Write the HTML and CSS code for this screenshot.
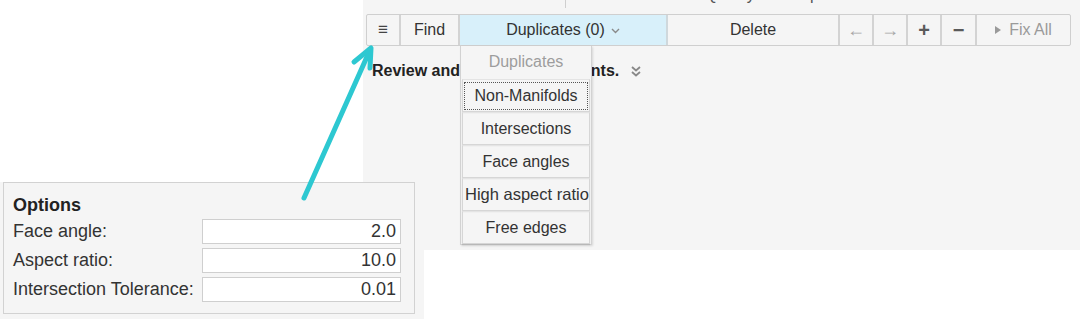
FILE: index.html
```html
<!DOCTYPE html>
<html lang="en">
<head>
    <meta charset="UTF-8">
    <title>Quality Cleanup</title>
    <link rel="stylesheet" href="styles.css">
</head>
<body>
    <div class="cleanup">
        <div class="title-bar">
            <span class="title-sep"></span>
            <span class="title">Quality Cleanup</span>
        </div>
        <div class="toolbar">
            <div class="tool tool-menu">&#8801;</div>
            <div class="tool tool-find">Find</div>
            <div class="tool tool-dup">Duplicates (0)
                <svg class="caret" width="9" height="6" viewBox="0 0 9 6"><path d="M1 1 L4.5 4.5 L8 1" fill="none" stroke="#8a8a8a" stroke-width="1.4"/></svg>
            </div>
            <div class="tool tool-delete">Delete</div>
            <div class="tool tool-arrow dim">&#8592;</div>
            <div class="tool tool-arrow dim">&#8594;</div>
            <div class="tool tool-arrow strong">+</div>
            <div class="tool tool-arrow strong minus">&#8722;</div>
            <div class="tool tool-fix dim">
                <svg width="6" height="8" viewBox="0 0 6 8"><path d="M0 0 L6 4 L0 8 Z" fill="#9a9a9a"/></svg>
                Fix All
            </div>
        </div>
        <div class="review">
            Review and correct all elements.
            <svg class="more" width="10" height="11" viewBox="0 0 10 11"><path d="M1 1 L5 4.5 L9 1 M1 6 L5 9.5 L9 6" fill="none" stroke="#888" stroke-width="1.8"/></svg>
        </div>

        <div class="dropdown">
            <div class="drop-head">Duplicates</div>
            <div class="drop-item focused"><span>Non-Manifolds</span></div>
            <div class="drop-item"><span>Intersections</span></div>
            <div class="drop-item"><span>Face angles</span></div>
            <div class="drop-item wide"><span>High aspect ratio elements</span></div>
            <div class="drop-item"><span>Free edges</span></div>
        </div>
    </div>

    <div class="options-wrap">
        <div class="options">
            <div class="options-title">Options</div>
            <div class="opt-row">
                <label>Face angle:</label>
                <div class="opt-input">2.0</div>
            </div>
            <div class="opt-row">
                <label>Aspect ratio:</label>
                <div class="opt-input">10.0</div>
            </div>
            <div class="opt-row">
                <label>Intersection Tolerance:</label>
                <div class="opt-input">0.01</div>
            </div>
        </div>
    </div>

    <svg class="pointer" width="1080" height="319" viewBox="0 0 1080 319">
        <line x1="304" y1="198" x2="370" y2="50" stroke="#2dc8d1" stroke-width="5" stroke-linecap="round"/>
        <polyline points="354,62 371,48 370,68" fill="none" stroke="#2dc8d1" stroke-width="5" stroke-linecap="round" stroke-linejoin="round"/>
    </svg>
</body>
</html>
```

FILE: styles.css
```css
* {
    margin: 0;
    padding: 0;
    box-sizing: border-box;
}

body {
    width: 1080px;
    height: 319px;
    background-color: #fff;
    font-family: "Liberation Sans", Arial, sans-serif;
    color: #333;
    position: relative;
    overflow: hidden;
}

.cleanup {
    position: absolute;
    left: 363px;
    top: 0;
    width: 717px;
    height: 250px;
    background-color: #f5f5f5;
}

.title-bar {
    height: 14px;
    display: flex;
    overflow: hidden;
}

.title-sep {
    width: 1px;
    height: 8px;
    margin-left: 202px;
    background-color: #cfcfcf;
}

.title {
    margin-left: 139px;
    margin-top: -13px;
    font-size: 16px;
    line-height: 16px;
    color: #555;
}

.toolbar {
    display: flex;
    margin-left: 3px;
    width: 705px;
    height: 32px;
    border: 1px solid #cfcfcf;
    border-radius: 2px;
    background-color: #f5f5f5;
}

.tool {
    display: flex;
    align-items: center;
    justify-content: center;
    gap: 6px;
    font-size: 16px;
    color: #333;
    border-right: 2px solid #d3d3d3;
}

.tool:last-child {
    border-right: none;
}

.tool-menu {
    width: 34px;
    font-size: 17px;
    font-weight: bold;
    color: #444;
}

.tool-find {
    width: 59px;
}

.tool-dup {
    width: 208px;
    background-color: #d8f0fa;
    border-right-color: #cfd8dc;
}

.caret {
    margin-top: 2px;
}

.tool-delete {
    width: 172px;
}

.tool-arrow {
    width: 34px;
    font-size: 18px;
}

.tool-arrow.minus {
    width: 35px;
}

.dim {
    color: #a6a6a6;
}

.strong {
    color: #5a5a5a;
    font-weight: bold;
    font-size: 20px;
}

.tool-fix {
    flex: 1;
    gap: 8px;
    color: #9a9a9a;
}

.review {
    margin-top: 16px;
    padding-left: 9px;
    font-size: 16px;
    line-height: 18px;
    font-weight: bold;
    color: #222;
    display: flex;
    align-items: center;
    gap: 12px;
}

.more {
    margin-top: 1px;
}

.dropdown {
    position: absolute;
    left: 97px;
    top: 46px;
    width: 132px;
    height: 199px;
    background-color: #f5f5f5;
    border: 1px solid #d2d2d2;
    border-top: none;
    box-shadow: 1px 1px 2px rgba(0, 0, 0, 0.12);
    padding: 0 1px;
}

.drop-head {
    height: 33px;
    line-height: 32px;
    text-align: center;
    font-size: 16px;
    color: #9d9d9d;
}

.drop-item {
    height: 33px;
    border: 1px solid #d6d6d6;
    border-top-color: #e4e4e4;
    box-shadow: 0 1px 1px rgba(0, 0, 0, 0.12);
    display: flex;
    align-items: center;
    justify-content: center;
    overflow: hidden;
    white-space: nowrap;
    font-size: 16px;
    color: #333;
}

.drop-item.focused span {
    border: 1px dotted #555;
    padding: 4px 0;
    width: 124px;
    text-align: center;
}

.drop-item.wide {
    justify-content: flex-start;
    padding-left: 2px;
    font-size: 16.5px;
}

.options-wrap {
    position: absolute;
    left: 0;
    top: 182px;
    width: 424px;
    height: 137px;
    background-color: #f5f5f5;
    padding-left: 3px;
}

.options {
    width: 412px;
    height: 132px;
    border: 1px solid #d2d2d2;
    padding: 12px 13px 0 9px;
    font-size: 18px;
    color: #333;
}

.options-title {
    font-weight: bold;
    line-height: 20px;
    margin-bottom: 4px;
    color: #222;
}

.opt-row {
    display: flex;
    align-items: center;
    height: 25px;
    margin-bottom: 4px;
}

.opt-row label {
    flex: 1;
}

.opt-input {
    width: 199px;
    height: 25px;
    border: 1px solid #cfcfcf;
    background-color: #fff;
    text-align: right;
    padding-right: 4px;
    line-height: 23px;
}

.pointer {
    position: absolute;
    left: 0;
    top: 0;
    pointer-events: none;
}
```
